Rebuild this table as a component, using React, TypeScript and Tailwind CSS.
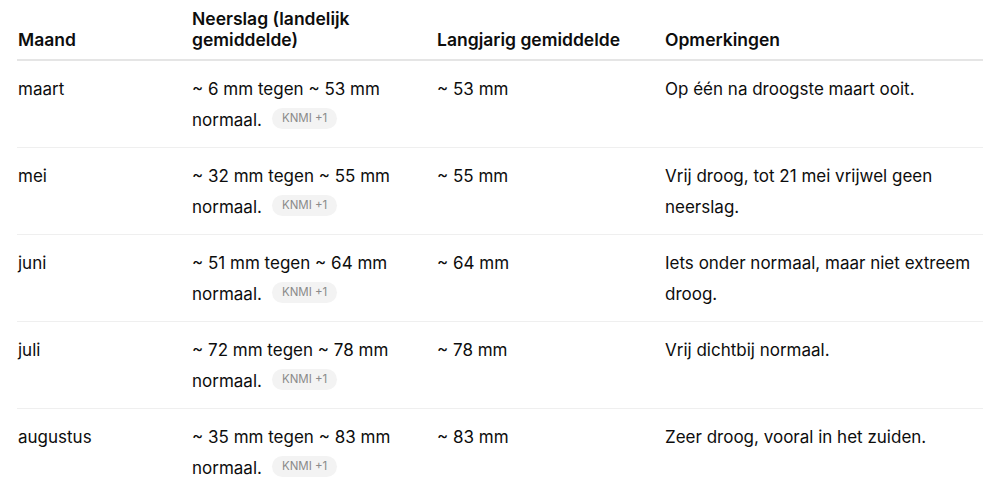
import React from "react";

const rows = [
  { m: "maart", n: "~ 6 mm tegen ~ 53 mm", l: "~ 53 mm", o: "Op één na droogste maart ooit." },
  { m: "mei", n: "~ 32 mm tegen ~ 55 mm", l: "~ 55 mm", o: "Vrij droog, tot 21 mei vrijwel geen neerslag." },
  { m: "juni", n: "~ 51 mm tegen ~ 64 mm", l: "~ 64 mm", o: "Iets onder normaal, maar niet extreem droog." },
  { m: "juli", n: "~ 72 mm tegen ~ 78 mm", l: "~ 78 mm", o: "Vrij dichtbij normaal." },
  { m: "augustus", n: "~ 35 mm tegen ~ 83 mm", l: "~ 83 mm", o: "Zeer droog, vooral in het zuiden." },
];

function Badge() {
  return (
    <span className="inline-flex items-center align-middle ml-[10px] h-[21px] px-[10px] rounded-full bg-[#f3f3f3] text-[#8a8a8a] text-[11.5px] leading-none relative top-[-2px]">
      KNMI +1
    </span>
  );
}

export default function App() {
  return (
    <div className="w-[1000px] h-[504px] bg-white overflow-hidden text-[#0d0d0d] font-['Inter','Liberation_Sans',sans-serif]">
      <table className="ml-[17px] w-[966px] table-fixed border-collapse">
        <colgroup>
          <col className="w-[175px]" />
          <col className="w-[245px]" />
          <col className="w-[228px]" />
          <col />
        </colgroup>
        <thead>
          <tr className="border-b-2 border-[#e5e5e5] text-left align-bottom">
            <th className="h-[60px] pb-[9px] pl-[1px] font-semibold text-[17.5px] leading-[21px]">Maand</th>
            <th className="pb-[9px] pr-[40px] font-semibold text-[17.5px] leading-[21px]">Neerslag (landelijk gemiddelde)</th>
            <th className="pb-[9px] font-semibold text-[17.5px] leading-[21px]">Langjarig gemiddelde</th>
            <th className="pb-[9px] font-semibold text-[17.5px] leading-[21px]">Opmerkingen</th>
          </tr>
        </thead>
        <tbody>
          {rows.map((r, i) => (
            <tr key={i} className={`align-top text-[17px] leading-[30.5px] ${i < rows.length - 1 ? "border-b border-[#efefef]" : ""}`}>
              <td className="pt-[13px] pb-[12px] pl-[1px]">{r.m}</td>
              <td className="pt-[13px] pb-[12px] pr-[20px]">
                {r.n} normaal.
                <Badge />
              </td>
              <td className="pt-[13px] pb-[12px]">{r.l}</td>
              <td className="pt-[13px] pb-[12px] pr-[2px]">{r.o}</td>
            </tr>
          ))}
        </tbody>
      </table>
    </div>
  );
}
